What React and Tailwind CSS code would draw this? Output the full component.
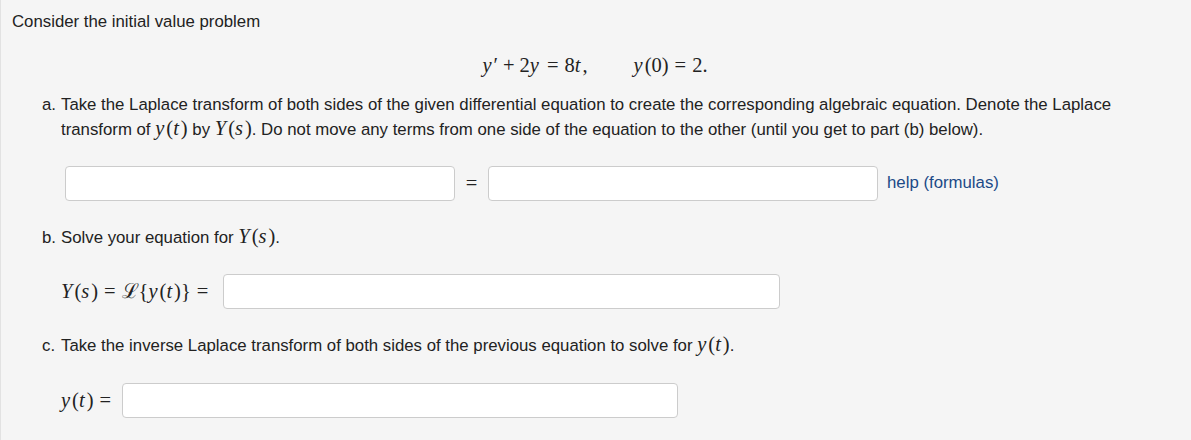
import React from "react"

const text = "font-['Liberation_Sans',Arial,sans-serif]"
const math = "font-['Liberation_Serif','DejaVu_Serif',serif]"

const M = ({ children, className = "" }) => (
  <span className={`${math} text-[20.5px] leading-none ${className}`}>{children}</span>
)
const I = ({ children }) => <i className="pr-[2px]">{children}</i>
// relation / binary operator with MathJax-like spacing
const Rel = ({ c = "=" }) => <span className="mx-[6px]">{c}</span>
const Bin = ({ c = "+" }) => <span className="mx-[5px]">{c}</span>

const Field = ({ w }) => (
  <input
    type="text"
    className={`${w} h-[35px] bg-white border border-[#cccccc] rounded-[4px] px-2 outline-none`}
  />
)

export default function App() {
  return (
    <div className={`${text} min-h-[440px] bg-[#f5f5f5] border-l border-[#e2e2e2] text-[#222] text-[16.8px] leading-[25px] pt-[9px]`}>
      <p className="pl-[11px]">Consider the initial value problem</p>

      {/* displayed equation */}
      <div className={`${math} text-[20.5px] leading-[24px] mt-[19px] flex justify-center gap-[46px] pr-[2px]`}>
        <span>
          <I>y</I>′<Bin />2<I>y</I><Rel />8<I>t</I>,
        </span>
        <span>
          <I>y</I>(0)<Rel />2.
        </span>
      </div>

      <div className="pl-[41px] pr-4">
        {/* part a */}
        <div className="flex mt-[15px]">
          <span className="w-[19px] shrink-0">a.</span>
          <p>
            Take the Laplace transform of both sides of the given differential equation to create the corresponding
            algebraic equation. Denote the Laplace transform of{" "}
            <M>
              <I>y</I>(<I>t</I>)
            </M>{" "}
            by{" "}
            <M>
              <I>Y</I>(<I>s</I>)
            </M>
            . Do not move any terms from one side of the equation to the other (until you get to part (b) below).
          </p>
        </div>

        <div className="flex items-center mt-[24px] pl-[23px]">
          <Field w="w-[390px]" />
          <span className={`${math} text-[20.5px] w-[33px] text-center`}>=</span>
          <Field w="w-[390px]" />
          <a href="#" className="ml-[9px] text-[#1c4a87] -mt-[2px]">
            help (formulas)
          </a>
        </div>

        {/* part b */}
        <div className="flex mt-[24px]">
          <span className="w-[19px] shrink-0">b.</span>
          <p>
            Solve your equation for{" "}
            <M>
              <I>Y</I>(<I>s</I>)
            </M>
            .
          </p>
        </div>

        <div className="flex items-center mt-[24px] pl-[19px]">
          <M className="mr-[9px]">
            <I>Y</I>(<I>s</I>)<Rel />ℒ{"{"}
            <I>y</I>(<I>t</I>){"}"}<Rel />
          </M>
          <Field w="w-[557px]" />
        </div>

        {/* part c */}
        <div className="flex mt-[24px]">
          <span className="w-[19px] shrink-0">c.</span>
          <p>
            Take the inverse Laplace transform of both sides of the previous equation to solve for{" "}
            <M>
              <I>y</I>(<I>t</I>)
            </M>
            .
          </p>
        </div>

        <div className="flex items-center mt-[25px] pl-[19px]">
          <M className="mr-[5px]">
            <I>y</I>(<I>t</I>)<Rel />
          </M>
          <Field w="w-[556px]" />
        </div>
      </div>
    </div>
  )
}
